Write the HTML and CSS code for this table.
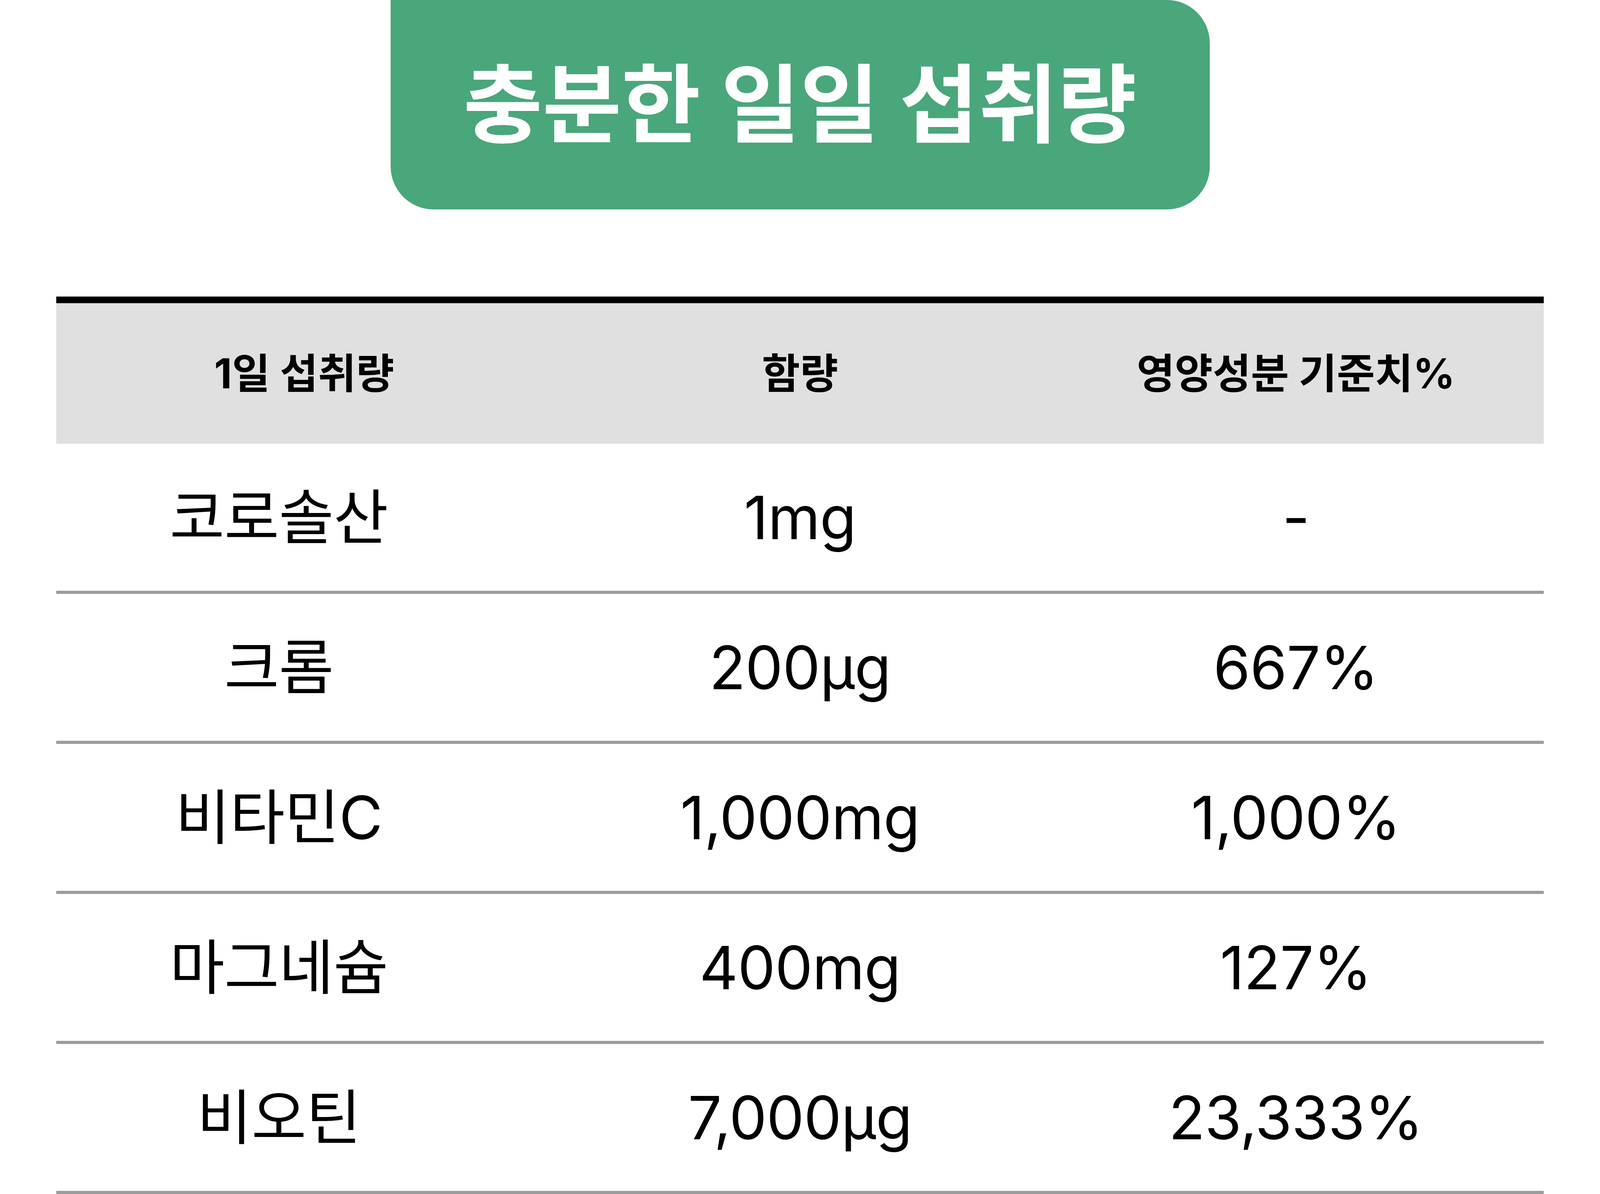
FILE: index.html
```html
<!DOCTYPE html>
<html lang="ko">
<head>
<meta charset="utf-8">
<title>충분한 일일 섭취량</title>
<link rel="stylesheet" href="styles.css">
</head>
<body>
<div class="page">
  <div class="badge"><h1 class="badge-title">충분한 일일 섭취량</h1></div>
  <div class="table">
    <div class="row head">
      <div class="cell">1일 섭취량</div>
      <div class="cell">함량</div>
      <div class="cell">영양성분 기준치%</div>
    </div>
    <div class="row">
      <div class="cell name">코로솔산</div>
      <div class="cell">1mg</div>
      <div class="cell">-</div>
    </div>
    <div class="row">
      <div class="cell name">크롬</div>
      <div class="cell">200μg</div>
      <div class="cell">667%</div>
    </div>
    <div class="row">
      <div class="cell name">비타민C</div>
      <div class="cell">1,000mg</div>
      <div class="cell">1,000%</div>
    </div>
    <div class="row">
      <div class="cell name">마그네슘</div>
      <div class="cell">400mg</div>
      <div class="cell">127%</div>
    </div>
    <div class="row">
      <div class="cell name">비오틴</div>
      <div class="cell">7,000μg</div>
      <div class="cell">23,333%</div>
    </div>
  </div>
</div>
</body>
</html>
```
FILE: styles.css
```css
html, body {
  margin: 0;
  padding: 0;
  background: #ffffff;
  overflow: hidden;
}
body {
  font-family: Inter, "Noto Sans CJK KR", sans-serif;
  color: #000000;
}
.page {
  width: 100%;
  display: flex;
  flex-direction: column;
  align-items: center;
}
.badge {
  width: 2097px;
  height: 536px;
  box-sizing: border-box;
  background: #4aa67b;
  border-radius: 0 110px 110px 110px;
  display: flex;
  align-items: center;
  justify-content: center;
}
.badge-title {
  margin: 0;
  color: #ffffff;
  font-size: 220px;
  font-weight: 700;
  line-height: 1;
  white-space: nowrap;
}
.table {
  width: 3808px;
  margin-top: 223px;
  border-top: 17px solid #000000;
  display: flex;
  flex-direction: column;
}
.row {
  display: grid;
  grid-template-columns: 1fr 1fr 1fr;
  height: 376px;
  border-bottom: 8px solid #9c9c9c;
  font-size: 153px;
  font-weight: 400;
  letter-spacing: -1px;
}
.row.head {
  height: 360px;
  border-bottom: 0;
  background: #e0e0e0;
  font-size: 106px;
  font-weight: 700;
  letter-spacing: 0;
}
.cell {
  display: flex;
  align-items: center;
  justify-content: center;
  white-space: nowrap;
  line-height: 1;
}
.cell.name {
  padding-right: 130px;
}
```
